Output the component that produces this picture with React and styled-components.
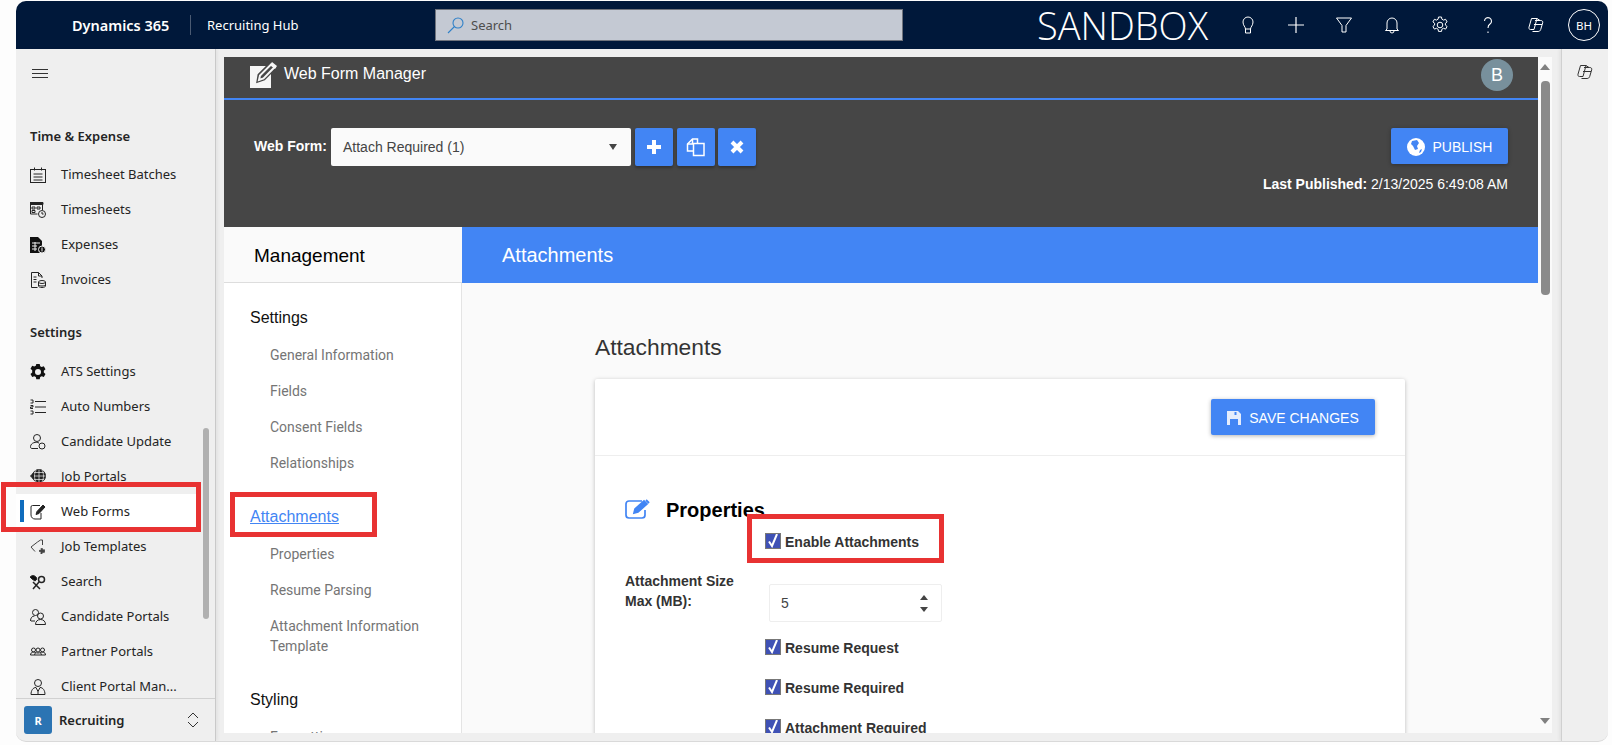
import React from "react";
import styled, { createGlobalStyle } from "styled-components";

const GlobalStyle = createGlobalStyle`
  html, body {
    margin: 0;
    padding: 0;
    background: #fdfdfd;
    overflow: hidden;
  }
  * { box-sizing: border-box; }
`;

const SEGOE = `"Noto Sans", "Open Sans", sans-serif`;
const ARIAL = `"Liberation Sans", Arial, sans-serif`;
const BLUE = "#4285f4";

const Page = styled.div`
  position: relative;
  width: 1612px;
  height: 745px;
  padding: 1px 4px 3px 16px;
  overflow: hidden;
`;

const Frame = styled.div`
  height: 741px;
  display: flex;
  flex-direction: column;
  background: #efefef;
  border-radius: 10px;
  border-bottom: 1px solid #d9d9d9;
  overflow: hidden;
`;

/* top navy bar */
const TopBar = styled.header`
  height: 48px;
  flex: none;
  display: flex;
  align-items: center;
  background: #00183a;
  color: #fff;
  font-family: ${SEGOE};
`;

const Brand = styled.div`
  margin-left: 56px;
  width: 118px;
  font-size: 14.5px;
  font-weight: 600;
  white-space: nowrap;
`;

const AppName = styled.div`
  height: 20px;
  width: 245px;
  padding-left: 16px;
  border-left: 1px solid #4a5a72;
  font-size: 13px;
  line-height: 20px;
  white-space: nowrap;
`;

const SearchBox = styled.div`
  width: 468px;
  height: 32px;
  display: flex;
  align-items: center;
  gap: 6px;
  padding-left: 11px;
  background: #c4c9d3;
  border: 1px solid #6f737c;
  color: #4d4d4d;
  font-size: 13px;
`;

const EnvName = styled.div`
  margin-left: 134px;
  font-family: "Open Sans", "Noto Sans", sans-serif;
  font-weight: 300;
  font-size: 38px;
  line-height: 48px;
  white-space: nowrap;
`;

const TopIcons = styled.div`
  margin-left: auto;
  display: flex;
  align-items: center;
`;

const TopIcon = styled.div`
  width: 48px;
  height: 48px;
  display: flex;
  align-items: center;
  justify-content: center;
`;

const Initials = styled.div`
  width: 32px;
  height: 32px;
  border: 1px solid #fff;
  border-radius: 50%;
  display: flex;
  align-items: center;
  justify-content: center;
  font-size: 11.5px;
`;

const Body = styled.div`
  flex: 1;
  min-height: 0;
  display: flex;
`;

/* left dynamics sidebar */
const Sidebar = styled.aside`
  position: relative;
  width: 200px;
  flex: none;
  display: flex;
  flex-direction: column;
  border-right: 1px solid #c9c9c9;
  box-shadow: 2px 0 3px rgba(0, 0, 0, 0.05);
  font-family: ${SEGOE};
  color: #242424;
`;

const Hamburger = styled.div`
  height: 51px;
  flex: none;
  display: flex;
  align-items: flex-start;
  padding: 20px 0 0 16px;
`;

const NavScroll = styled.div`
  flex: 1;
  min-height: 0;
  overflow: hidden;
`;

const SectionLabel = styled.div`
  height: 57px;
  padding: ${(p) => (p.$first ? "26px" : "25px")} 0 0 14px;
  font-size: 13px;
  font-weight: 600;
  line-height: 20px;
`;

const NavItem = styled.div`
  position: relative;
  height: 35px;
  margin-right: 19px;
  padding: 0 0 2px 14px;
  display: flex;
  align-items: center;
  gap: 15px;
  font-size: 13px;
  white-space: nowrap;
  background: ${(p) => (p.$active ? "#fff" : "transparent")};

  svg { margin-top: 2px; }

  &::before {
    content: "";
    display: ${(p) => (p.$active ? "block" : "none")};
    position: absolute;
    left: 4px;
    top: 6px;
    width: 4px;
    height: 22px;
    background: #0f6cbd;
  }
`;

const SideThumb = styled.div`
  position: absolute;
  left: 187px;
  top: 379px;
  width: 6px;
  height: 191px;
  border-radius: 3px;
  background: #b0b0b0;
`;

const AreaSwitch = styled.div`
  height: 43px;
  flex: none;
  display: flex;
  align-items: center;
  padding-left: 8px;
  border-top: 1px solid #d1d1d1;
`;

const AreaTile = styled.div`
  width: 28px;
  height: 28px;
  border-radius: 3px;
  background: #2b74b3;
  color: #fff;
  display: flex;
  align-items: center;
  justify-content: center;
  font-size: 11px;
  font-weight: 700;
`;

const AreaName = styled.div`
  margin-left: 7px;
  width: 127px;
  font-size: 13px;
  font-weight: 600;
`;

/* embedded web form manager */
const Embedded = styled.main`
  flex: 1;
  min-width: 0;
  margin: 8px 0 8px 8px;
  display: flex;
  background: #fafafa;
  overflow: hidden;
`;

const FormApp = styled.div`
  width: 1314px;
  flex: none;
  display: flex;
  flex-direction: column;
  font-family: ${ARIAL};
`;

const ManagerBar = styled.div`
  height: 43px;
  flex: none;
  display: flex;
  align-items: flex-start;
  padding: 5px 25px 0 26px;
  background: #464646;
  border-bottom: 2px solid ${BLUE};
  color: #fff;
  font-size: 16px;
`;

const ManagerTitle = styled.div`
  margin: 1px 0 0 7px;
  line-height: 22px;
  flex: 1;
`;

const UserBadge = styled.div`
  width: 32px;
  height: 32px;
  margin-top: -3px;
  border-radius: 50%;
  background: #78909c;
  display: flex;
  align-items: center;
  justify-content: center;
  font-size: 18px;
`;

const FormBar = styled.div`
  height: 127px;
  flex: none;
  display: flex;
  justify-content: space-between;
  padding: 28px 30px 0 30px;
  background: #464646;
  color: #fff;
`;

const Picker = styled.div`
  display: flex;
  align-items: flex-start;
`;

const PickerLabel = styled.label`
  width: 77px;
  font-size: 14px;
  font-weight: 700;
  line-height: 36px;
`;

const SelectBox = styled.div`
  width: 300px;
  height: 38px;
  margin-right: 4px;
  padding: 0 14px 0 12px;
  display: flex;
  align-items: center;
  justify-content: space-between;
  background: #fafafa;
  border-radius: 2px;
  color: #444;
  font-size: 14px;
`;

const Caret = styled.span`
  width: 0;
  height: 0;
  border-left: 4.5px solid transparent;
  border-right: 4.5px solid transparent;
  border-top: 6px solid #444;
`;

const IconButton = styled.button`
  width: 38px;
  height: 38px;
  margin-right: ${(p) => p.$gap}px;
  padding: 0;
  border: 0;
  border-radius: 2px;
  background: ${BLUE};
  display: flex;
  align-items: center;
  justify-content: center;
  box-shadow: 0 2px 3px rgba(0, 0, 0, 0.3);
`;

const PublishCol = styled.div`
  display: flex;
  flex-direction: column;
  align-items: flex-end;
`;

const Raised = styled.button`
  height: 36px;
  padding: 1px 0 0;
  border: 0;
  border-radius: 2px;
  background: ${BLUE};
  color: #fff;
  font-family: ${ARIAL};
  font-size: 14px;
  display: flex;
  align-items: center;
  justify-content: center;
  gap: ${(p) => p.$gap}px;
  width: ${(p) => p.$width}px;
  box-shadow: 0 1px 4px rgba(0, 0, 0, 0.3);
`;

const LastPublished = styled.div`
  margin-top: 12px;
  font-size: 14px;
  line-height: 16px;

  b { font-weight: 700; }
`;

const TitleRow = styled.div`
  height: 56px;
  flex: none;
  display: flex;
`;

const ManagementHead = styled.div`
  width: 238px;
  padding: 2px 0 0 30px;
  display: flex;
  align-items: center;
  background: #fafafa;
  border-bottom: 1px solid #ddd;
  color: #000;
  font-size: 19px;
`;

const PageHead = styled.div`
  flex: 1;
  padding-left: 40px;
  display: flex;
  align-items: center;
  background: ${BLUE};
  color: #fff;
  font-size: 20px;
`;

const Split = styled.div`
  flex: 1;
  min-height: 0;
  display: flex;
`;

const LeftNav = styled.nav`
  width: 238px;
  flex: none;
  padding-top: 25px;
  background: #fff;
  border-right: 1px solid #e4e4e4;
  overflow: hidden;
`;

const NavHead = styled.div`
  padding-left: 26px;
  font-size: 16px;
  line-height: 20px;
  color: ${(p) => (p.$link ? BLUE : "#111")};
  text-decoration: ${(p) => (p.$link ? "underline" : "none")};
  margin-top: ${(p) => p.$top || 0}px;
`;

const NavLink = styled.div`
  padding: 0 20px 0 46px;
  margin-top: ${(p) => p.$top || 16}px;
  font-family: Roboto, ${ARIAL};
  font-size: 14px;
  line-height: 20px;
  color: #757575;
`;

const Content = styled.div`
  flex: 1;
  min-width: 0;
  padding: 51px 133px 0;
  overflow: hidden;
`;

const ContentTitle = styled.h2`
  margin: 0 0 19px;
  font-size: 22.8px;
  font-weight: 400;
  line-height: 26px;
  color: #333;
`;

const Card = styled.section`
  background: #fff;
  border-radius: 2px;
  box-shadow: 0 1px 4px rgba(0, 0, 0, 0.25);
  padding-bottom: 40px;
`;

const CardHead = styled.div`
  height: 77px;
  padding: 20px 30px 0 0;
  display: flex;
  justify-content: flex-end;
  border-bottom: 1px solid #eee;
`;

const CardBody = styled.div`
  padding: 43px 30px 0;
`;

const SectionHead = styled.div`
  height: 20px;
  display: flex;
  align-items: center;
  gap: 15px;
`;

const SectionTitle = styled.h3`
  margin: 2px 0 0;
  font-size: 20px;
  font-weight: 700;
  color: #000;
`;

const CheckRow = styled.label`
  height: 16px;
  padding-top: 2px;
  margin-top: ${(p) => p.$top}px;
  margin-left: 140px;
  display: flex;
  align-items: center;
  gap: 4px;
  font-size: 14px;
  font-weight: 700;
  color: #333;
  white-space: nowrap;
`;

const CheckBox = styled.span`
  width: 16px;
  height: 16px;
  margin-top: -2px;
  flex: none;
  display: block;
  background: #3f51b5;
  border: 1px solid #777;
`;

const SizeRow = styled.div`
  margin-top: 22px;
  display: flex;
`;

const SizeLabel = styled.label`
  width: 144px;
  font-size: 14px;
  font-weight: 700;
  line-height: 20px;
  color: #333;
`;

const NumberBox = styled.div`
  width: 173px;
  height: 38px;
  margin-top: 13px;
  padding: 0 13px 0 11px;
  display: flex;
  align-items: center;
  justify-content: space-between;
  border: 1px solid #eee;
  border-radius: 2px;
  font-size: 14px;
  color: #444;
`;

const Spinner = styled.span`
  display: flex;
  flex-direction: column;
  gap: 7px;
`;

const SpinArrow = styled.i`
  display: block;
  width: 0;
  height: 0;
  border-left: 4px solid transparent;
  border-right: 4px solid transparent;
  border-${(p) => (p.$up ? "bottom" : "top")}: 5px solid #444;
`;

const ScrollTrack = styled.div`
  width: 14px;
  flex: none;
  padding-top: 7px;
  display: flex;
  flex-direction: column;
  align-items: center;
  background: #fafafa;
`;

const ScrollArrow = styled.i`
  display: block;
  width: 0;
  height: 0;
  border-left: 5px solid transparent;
  border-right: 5px solid transparent;
  border-${(p) => (p.$up ? "bottom" : "top")}: 6px solid #808080;
`;

const ScrollThumb = styled.div`
  width: 9px;
  height: 214px;
  margin: 11px 0 auto;
  border-radius: 4px;
  background: #8a8a8a;
`;

const ScrollEnd = styled.div`
  padding-bottom: 9px;
`;

const RightRail = styled.div`
  width: 47px;
  flex: none;
  margin-left: 9px;
  padding: 14px 0 0 14px;
  border-left: 1px solid #d0d0d0;
  box-shadow: -2px 0 3px rgba(0, 0, 0, 0.05);
`;

/* red callouts drawn over the screenshot */
const Callout = styled.div`
  position: absolute;
  left: ${(p) => p.$x}px;
  top: ${(p) => p.$y}px;
  width: ${(p) => p.$w}px;
  height: ${(p) => p.$h}px;
  border: 5px solid #e83232;
  pointer-events: none;
`;

const Ico = ({ size = 16, vb = 16, children, color = "#242424", fill = "none", sw = 1 }) => (
  <svg width={size} height={size} viewBox={`0 0 ${vb} ${vb}`} fill={fill} stroke={color} strokeWidth={sw} style={{ flex: "none" }}>
    {children}
  </svg>
);

const CopilotIcon = ({ color, size = 18 }) => (
  <Ico size={size} vb={18} color={color}>
    <path d="M4.5 2.5h5.5l-3 11H3.5C2.2 13.5 1.6 12.4 2 11.2z" />
    <path d="M8 4.5h5.8c1.4 0 2.3 1 1.9 2.3l-2 6.7c-.4 1.3-1.4 2-2.6 2H5.5" />
    <path d="M7 8.5h8M10 2.5l3 2" />
  </Ico>
);

const icons = {
  batches: (
    <Ico>
      <rect x="0.5" y="2.5" width="15" height="13" />
      <path d="M4.5 0.5v3M11.5 0.5v3M3.5 7h9M3.5 10h9M3.5 13h9" />
    </Ico>
  ),
  timesheets: (
    <Ico>
      <path d="M0 0.5h13v2H0z" fill="#242424" />
      <path d="M0.5 2.5h12v5.5M0.5 2.5v9.5h7M2 5h3v2H2zM7 5h3v2H7zM2 8.5h3v2H2z" />
      <circle cx="12" cy="12" r="3.5" fill="#efefef" />
      <path d="M12 10v2h1.6" />
    </Ico>
  ),
  expenses: (
    <Ico>
      <path d="M0 0h8l4 4v12H0z" fill="#111" stroke="none" />
      <path d="M2 6h8M2 9h5M2 12h5M5 5v9" stroke="#efefef" />
      <circle cx="12" cy="12.5" r="3.5" fill="#111" stroke="#efefef" />
      <path d="M12 10.5v4" stroke="#efefef" />
    </Ico>
  ),
  invoices: (
    <Ico>
      <path d="M1.5 0.5h7l3.5 3.5v2M1.5 0.5v15h6M8.5 0.5v3.5H12" />
      <path d="M3.5 5h3M3.5 7.5h3M3.5 10h3" />
      <ellipse cx="12" cy="10" rx="3.5" ry="1.5" />
      <path d="M8.5 10v4c0 .8 1.6 1.5 3.5 1.5s3.5-.7 3.5-1.5v-4M8.5 12.5c0 .8 1.6 1.5 3.5 1.5s3.5-.7 3.5-1.5" />
    </Ico>
  ),
  gear: (
    <Ico fill="#111" color="#111">
      <path fillRule="evenodd" stroke="none" d="M6.3 0h3.4l.5 2.200 1.500.8 2.100-.8 1.700 3-1.700 1.500v1.800l1.700 1.500-1.700 3-2.100-.8-1.500.8-.5 2.200H6.300l-.5-2.200-1.500-.8-2.100.8-1.700-3 1.700-1.500V6.200L.5 4.700l1.700-3 2.100.8 1.500-.8zM8 5a3 3 0 1 0 0 6 3 3 0 0 0 0-6z" />
    </Ico>
  ),
  numbers: (
    <Ico>
      <path d="M5 2.500h11M5 8h11M5 13.500h11" />
      <path d="M.5 1h2.500v3H.5M.5 6.500h2.500v1.500H.5v1.500h2.500M.5 12h2.500v3H.5" />
    </Ico>
  ),
  update: (
    <Ico>
      <circle cx="7" cy="4" r="3.500" />
      <path d="M9 9c-3-1.500-8-.5-8.500 3.500 0 1.500.5 2 1.500 2h6" />
      <circle cx="12" cy="12" r="3" />
    </Ico>
  ),
  portals: (
    <Ico>
      <circle cx="9" cy="7" r="6.500" fill="#242424" />
      <path d="M2.500 7h13M9 .5v13M4 3.500h10M4 10.500h10M6 1c-2 4-2 8 0 12M12 1c2 4 2 8 0 12" stroke="#efefef" strokeWidth="0.700" />
      <path d="M.5 7l3-3v6z" fill="#242424" />
      <path d="M5 15h8" />
    </Ico>
  ),
  forms: (
    <Ico>
      <path d="M10 1.500H2.500A1.500 1.500 0 0 0 1 3v8c0 2.500 2 4 4 4h6V9" />
      <path d="M6 10.500l1-3 6-6.500 2 2-6 6.500z" fill="#242424" />
    </Ico>
  ),
  templates: (
    <Ico color="#444">
      <path d="M7.500 3L1 8l4 4.500" />
      <path d="M7.500 3l3-2h2v5" />
      <circle cx="12" cy="12" r="2" fill="#444" strokeWidth="2" strokeDasharray="1.500 1" />
    </Ico>
  ),
  search: (
    <Ico>
      <path d="M0 3c2-2 4-2 6 0 1 1 1 3-1 4L2 5z" fill="#111" />
      <circle cx="11.500" cy="5.500" r="3" strokeWidth="1.500" />
      <path d="M9 8l-6 7M3 8l7 7" strokeWidth="1.500" />
    </Ico>
  ),
  candidates: (
    <Ico>
      <circle cx="5.500" cy="3.500" r="3" />
      <path d="M.5 12c0-3 1.500-5 4-5" />
      <circle cx="10.500" cy="7" r="3" />
      <path d="M5.500 15.500c0-3 2-5 5-5s5 2 5 5zM1 12h4" />
    </Ico>
  ),
  partners: (
    <Ico>
      <circle cx="3.500" cy="6" r="2" />
      <circle cx="8" cy="6" r="2" />
      <circle cx="12.500" cy="6" r="2" />
      <path d="M0.500 11c0-1.500 1-3 3-3 1.500 0 2.500 1 4.500 1s3-1 4.500-1c2 0 3 1.500 3 3zM5.500 8.500L4.500 11M10.500 8.500l1 2.500" />
    </Ico>
  ),
  client: (
    <Ico>
      <circle cx="8" cy="4" r="3.500" />
      <path d="M1 15.500c0-4 2-7 5-7l2 4 2-4c3 0 5 3 5 7zM8 12.500v3" />
    </Ico>
  ),
};

const timeItems = [
  ["Timesheet Batches", "batches"],
  ["Timesheets", "timesheets"],
  ["Expenses", "expenses"],
  ["Invoices", "invoices"],
];

const settingsItems = [
  ["ATS Settings", "gear"],
  ["Auto Numbers", "numbers"],
  ["Candidate Update", "update"],
  ["Job Portals", "portals"],
  ["Web Forms", "forms", true],
  ["Job Templates", "templates"],
  ["Search", "search"],
  ["Candidate Portals", "candidates"],
  ["Partner Portals", "partners"],
  ["Client Portal Man...", "client"],
];

const HeaderIcons = () => (
  <TopIcons>
    <TopIcon>
      <Ico size={20} vb={20} color="#fff">
        <path d="M7.500 14c0-2-2.500-3.500-2.500-7a5 5 0 0 1 10 0c0 3.500-2.500 5-2.500 7zM7.500 14v4h5v-4" />
      </Ico>
    </TopIcon>
    <TopIcon>
      <Ico size={20} vb={20} color="#fff" sw={1.2}>
        <path d="M10 2v16M2 10h16" />
      </Ico>
    </TopIcon>
    <TopIcon>
      <Ico size={20} vb={20} color="#fff">
        <path d="M2.500 3h15L12 10.500V17H8v-6.500z" />
      </Ico>
    </TopIcon>
    <TopIcon>
      <Ico size={20} vb={20} color="#fff">
        <path d="M5 14V8a5 5 0 0 1 10 0v6l1.500 1.500h-13zM8 16a2 2 0 0 0 4 0" />
      </Ico>
    </TopIcon>
    <TopIcon>
      <Ico size={20} vb={20} color="#fff">
        <circle cx="10" cy="10" r="2.800" />
        <path d="M8.500 2h3l.4 2.200 1.600.9 2.100-.8 1.500 2.600-1.700 1.400v1.800l1.700 1.400-1.500 2.600-2.100-.8-1.600.9-.4 2.200h-3l-.4-2.200-1.600-.9-2.100.8-1.500-2.600 1.700-1.400V8.300L2.900 6.900l1.500-2.600 2.100.8 1.600-.9z" />
      </Ico>
    </TopIcon>
    <TopIcon>
      <Ico size={20} vb={20} color="#fff" sw={1.1}>
        <path d="M6.500 6a3.500 3.500 0 1 1 5.500 3c-1.500 1-2 2-2 4M10 16.500v1.500" />
      </Ico>
    </TopIcon>
    <TopIcon>
      <CopilotIcon color="#fff" />
    </TopIcon>
    <TopIcon>
      <Initials>BH</Initials>
    </TopIcon>
  </TopIcons>
);

const Check = ({ label, top }) => (
  <CheckRow $top={top}>
    <CheckBox>
      <svg width="14" height="14" viewBox="0 0 14 14" fill="none" stroke="#fff" strokeWidth="2">
        <path d="M3 7.500l3 4.500 5-12" />
      </svg>
    </CheckBox>
    {label}
  </CheckRow>
);

export default function App() {
  return (
    <Page>
      <GlobalStyle />
      <Frame>
        <TopBar>
          <Brand>Dynamics 365</Brand>
          <AppName>Recruiting Hub</AppName>
          <SearchBox>
            <svg width="18" height="18" viewBox="0 0 18 18" fill="none" stroke="#2f80c8" strokeWidth="1.100">
              <circle cx="11" cy="7" r="5" />
              <path d="M7.500 10.500L1 17" />
            </svg>
            Search
          </SearchBox>
          <EnvName>SANDBOX</EnvName>
          <HeaderIcons />
        </TopBar>
        <Body>
          <Sidebar>
            <Hamburger>
              <svg width="16" height="9" viewBox="0 0 16 9" stroke="#333" strokeWidth="1">
                <path d="M0 .5h16M0 4.500h16M0 8.500h16" />
              </svg>
            </Hamburger>
            <NavScroll>
              <SectionLabel $first>Time &amp; Expense</SectionLabel>
              {timeItems.map(([label, icon]) => (
                <NavItem key={label}>
                  {icons[icon]}
                  {label}
                </NavItem>
              ))}
              <SectionLabel>Settings</SectionLabel>
              {settingsItems.map(([label, icon, active]) => (
                <NavItem key={label} $active={active}>
                  {icons[icon]}
                  {label}
                </NavItem>
              ))}
            </NavScroll>
            <SideThumb />
            <AreaSwitch>
              <AreaTile>R</AreaTile>
              <AreaName>Recruiting</AreaName>
              <svg width="14" height="16" viewBox="0 0 14 16" fill="none" stroke="#333" strokeWidth="1">
                <path d="M2 6l5-5 5 5M2 10l5 5 5-5" />
              </svg>
            </AreaSwitch>
          </Sidebar>
          <Embedded>
            <FormApp>
              <ManagerBar>
                <svg width="27" height="27" viewBox="0 0 27 27" style={{ flex: "none" }}>
                  <path d="M0 4h21v22H0z" fill="#f6f6f6" />
                  <path d="M8 19l1-6L21 1l5 4-12 12z" fill="#464646" stroke="#464646" strokeWidth="3" />
                  <path d="M9 18l1-4.500L21 2.500l3.500 2.800-11 11.200z" fill="none" stroke="#f6f6f6" strokeWidth="2" />
                  <path d="M20 3l2-3 5 4-2 3z" fill="#f6f6f6" />
                </svg>
                <ManagerTitle>Web Form Manager</ManagerTitle>
                <UserBadge>B</UserBadge>
              </ManagerBar>
              <FormBar>
                <Picker>
                  <PickerLabel>Web Form:</PickerLabel>
                  <SelectBox>
                    Attach Required (1)
                    <Caret />
                  </SelectBox>
                  <IconButton aria-label="Add" $gap={4}>
                    <svg width="16" height="16" viewBox="0 0 16 16" fill="#fff">
                      <path d="M6 1h4v5h5v4h-5v5H6v-5H1V6h5z" />
                    </svg>
                  </IconButton>
                  <IconButton aria-label="Copy" $gap={3}>
                    <svg width="20" height="20" viewBox="0 0 20 20" fill="none" stroke="#fff" strokeWidth="1.500">
                      <path d="M7.500 14H1.500V7l5-5h5v4" />
                      <path d="M7.500 6.500h10.500V18.500H7.500z" />
                      <path d="M1.500 7h5V2" />
                    </svg>
                  </IconButton>
                  <IconButton aria-label="Delete" $gap={0}>
                    <svg width="14" height="14" viewBox="0 0 14 14" stroke="#fff" strokeWidth="4">
                      <path d="M2 2l10 10M12 2L2 12" />
                    </svg>
                  </IconButton>
                </Picker>
                <PublishCol>
                  <Raised $width={117} $gap={8}>
                    <svg width="18" height="18" viewBox="0 0 18 18">
                      <circle cx="9" cy="9" r="9" fill="#fff" />
                      <path d="M5 3l5-1 2 3-2 3 1 3-3 1-2-4-2-2zM13 12l2-1-1 3-2 1z" fill={BLUE} />
                    </svg>
                    PUBLISH
                  </Raised>
                  <LastPublished>
                    <b>Last Published:</b> 2/13/2025 6:49:08 AM
                  </LastPublished>
                </PublishCol>
              </FormBar>
              <TitleRow>
                <ManagementHead>Management</ManagementHead>
                <PageHead>Attachments</PageHead>
              </TitleRow>
              <Split>
                <LeftNav>
                  <NavHead>Settings</NavHead>
                  <NavLink $top={17}>General Information</NavLink>
                  <NavLink>Fields</NavLink>
                  <NavLink>Consent Fields</NavLink>
                  <NavLink>Relationships</NavLink>
                  <NavHead $link $top={34}>Attachments</NavHead>
                  <NavLink $top={17}>Properties</NavLink>
                  <NavLink>Resume Parsing</NavLink>
                  <NavLink>Attachment Information Template</NavLink>
                  <NavHead $top={34}>Styling</NavHead>
                  <NavLink $top={17}>Formatting</NavLink>
                </LeftNav>
                <Content>
                  <ContentTitle>Attachments</ContentTitle>
                  <Card>
                    <CardHead>
                      <Raised $width={164} $gap={8}>
                        <svg width="14" height="14" viewBox="0 0 14 14">
                          <path d="M0 0h11l3 3v11H0z" fill="#e4ecfc" />
                          <path d="M7.500 1h2v3h-2zM3 8h8v6H3z" fill={BLUE} />
                        </svg>
                        SAVE CHANGES
                      </Raised>
                    </CardHead>
                    <CardBody>
                      <SectionHead>
                        <svg width="26" height="20" viewBox="0 0 26 20" fill="none" stroke={BLUE} strokeWidth="1.700" style={{ flex: "none" }}>
                          <path d="M17 2H4a3 3 0 0 0-3 3v11a3 3 0 0 0 3 3h13a3 3 0 0 0 3-3v-5" />
                          <path d="M9 14l1-4 9-8 3 3-9 8z" fill={BLUE} />
                          <path d="M21 1l3 3" strokeWidth="2" />
                        </svg>
                        <SectionTitle>Properties</SectionTitle>
                      </SectionHead>
                      <Check label="Enable Attachments" top={14} />
                      <SizeRow>
                        <SizeLabel>
                          Attachment Size
                          <br />
                          Max (MB):
                        </SizeLabel>
                        <NumberBox>
                          5
                          <Spinner>
                            <SpinArrow $up />
                            <SpinArrow />
                          </Spinner>
                        </NumberBox>
                      </SizeRow>
                      <Check label="Resume Request" top={17} />
                      <Check label="Resume Required" top={24} />
                      <Check label="Attachment Required" top={24} />
                    </CardBody>
                  </Card>
                </Content>
              </Split>
            </FormApp>
            <ScrollTrack>
              <ScrollArrow $up />
              <ScrollThumb />
              <ScrollEnd>
                <ScrollArrow />
              </ScrollEnd>
            </ScrollTrack>
          </Embedded>
          <RightRail>
            <CopilotIcon color="#333" />
          </RightRail>
        </Body>
      </Frame>
      <Callout $x={1} $y={482} $w={200} $h={50} />
      <Callout $x={230} $y={492} $w={147} $h={45} />
      <Callout $x={747} $y={514} $w={197} $h={49} />
    </Page>
  );
}
